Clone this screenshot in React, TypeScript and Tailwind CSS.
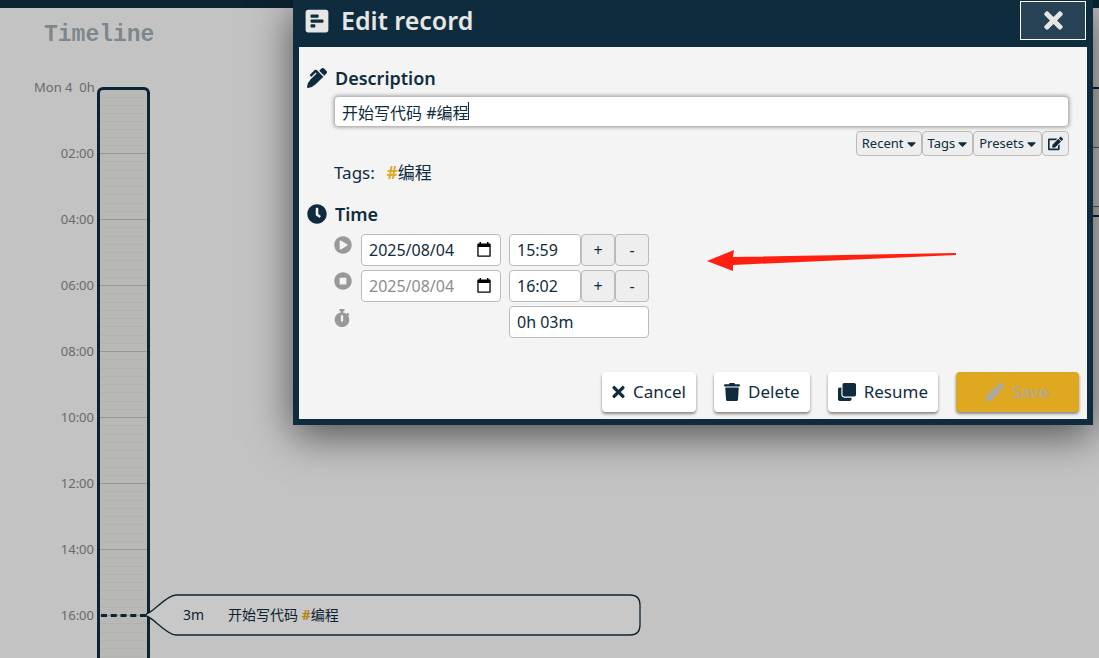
import type { InputHTMLAttributes, ReactNode } from "react";
import {
  FaCaretDown,
  FaClock,
  FaClone,
  FaEdit,
  FaPen,
  FaPenAlt,
  FaPlayCircle,
  FaPollH,
  FaStopCircle,
  FaStopwatch,
  FaTimes,
  FaTrash,
} from "react-icons/fa";

const hours = [
  "Mon 4  0h",
  "02:00",
  "04:00",
  "06:00",
  "08:00",
  "10:00",
  "12:00",
  "14:00",
  "16:00",
];

const Field = (props: InputHTMLAttributes<HTMLInputElement>) => (
  <input
    type="text"
    {...props}
    className={`h-8 rounded-sm border border-[#bbb] bg-white px-[7px] text-base outline-none ${props.className ?? ""}`}
  />
);

const SmallButton = ({ children, label }: { children: ReactNode; label?: string }) => (
  <button
    type="button"
    aria-label={label}
    className="flex h-[25px] items-center gap-[3px] rounded-sm border border-[#bbb] bg-[#eee] px-[5px] text-[13px]"
  >
    {children}
  </button>
);

const Caret = () => <FaCaretDown className="h-3.5 w-[9px]" />;

const StepButton = ({ children }: { children: ReactNode }) => (
  <button type="button" className="h-8 w-[34px] rounded-sm border border-[#bbb] bg-[#eee] text-base">
    {children}
  </button>
);

const ActionButton = ({ children }: { children: ReactNode }) => (
  <button
    type="button"
    className="flex h-10 items-center gap-2 rounded-sm bg-white px-2.5 text-[17px] shadow-[0_2px_3px_rgba(0,0,0,0.45)]"
  >
    {children}
  </button>
);

const DateField = ({ label, className = "" }: { label: string; className?: string }) => (
  <div className="relative w-[140px]">
    <Field aria-label={label} defaultValue="2025/08/04" className={`w-full ${className}`} />
    <svg viewBox="0 0 14 15" className="absolute top-2 right-2.5 h-[15px] w-3.5 text-black">
      <path
        d="M2.500 0h1.500v1.500h6V0h1.500v1.500H13a.7.7 0 0 1 .7.7V14a.7.7 0 0 1-.7.7H1a.7.7 0 0 1-.7-.7V2.200a.7.7 0 0 1 .7-.7h1.500zM1.600 5v8.400h10.800V5z"
        fill="currentColor"
        fillRule="evenodd"
      />
    </svg>
  </div>
);

const Timeline = () => (
  <main className="flex-1 pt-[13px] pl-[34px]">
    <h1 className="pl-2.5 font-['Liberation_Mono',monospace] text-[23px] leading-7 font-bold text-[#0f2c3e]/40">
      Timeline
    </h1>
    <div className="relative mt-[38px] flex">
      <div className="-mt-2 w-[63px] shrink-0 pr-[3px] text-right text-[13px] leading-4 whitespace-pre text-[#858585]">
        {hours.map((hour) => (
          <div key={hour} className="h-[66px]">
            {hour}
          </div>
        ))}
      </div>
      <div className="w-[53px] shrink-0 overflow-hidden rounded-t-md border-[3px] border-b-0 border-[#0f2c3e] bg-[#e6e6e4]">
        {hours.map((hour) => (
          <div
            key={hour}
            className="flex h-[66px] flex-col justify-evenly border-b border-[#bdbdbd] first:h-16"
          >
            {[1, 2, 3, 4, 5, 6, 7].map((n) => (
              <div key={n} className="h-px bg-[#dfdfdd]" />
            ))}
          </div>
        ))}
      </div>
      <div className="absolute top-[527px] left-[67px] w-[45px] border-t-[3px] border-dashed border-[#0f2c3e]" />
      <div className="absolute top-[507px] left-28 flex h-[42px] items-center">
        <svg viewBox="0 0 495 42" className="h-[42px] w-[495px]">
          <path
            d="M0 20C6 20 20 1 30 1H484Q494 1 494 11V31Q494 41 484 41H30C20 41 6 22 0 22Z"
            fill="#fafafa"
            stroke="currentColor"
            strokeWidth="1.300"
          />
        </svg>
        <div className="absolute left-[37px] flex text-sm">
          <span className="w-[45px]">3m</span>
          <span>
            开始写代码 <b className="text-[#dea821]">#</b>编程
          </span>
        </div>
      </div>
    </div>
  </main>
);

const Overview = () => (
  <aside className="w-1/3 pt-[79px]">
    <div className="border-t-2 border-[#0f2c3e]">
      <div className="h-[58px] bg-[#e6e6e4]" />
      <div className="h-[60px] border-y border-[#5d7180]" />
      <div className="h-2 bg-[#e6e6e4]" />
    </div>
    <div className="border-t-2 border-[#0f2c3e]" />
  </aside>
);

export default function App() {
  return (
    <div className="relative h-screen overflow-hidden bg-[#f4f4f4] font-['Noto_Sans','Noto_Sans_CJK_SC',sans-serif] text-[#0f2c3e]">
      <header className="h-2 bg-[#0f2c3e]" />
      <div className="flex">
        <Timeline />
        <Overview />
      </div>

      <div className="absolute inset-0 flex items-start justify-end bg-black/20 pr-1.5">
        <section
          role="dialog"
          aria-label="Edit record"
          className="w-full max-w-[800px] border-6 border-t-0 border-[#0f2c3e] bg-[#f4f4f4] shadow-[0_10px_40px_rgba(0,0,0,0.6)]"
        >
          <div className="flex h-[47px] items-start justify-between bg-[#0f2c3e] text-[#e6e7e5]">
            <h2 className="flex h-[41px] items-center gap-[11px] pl-[5px] text-[25px] font-semibold">
              <FaPollH className="size-[26px]" />
              Edit record
            </h2>
            <button
              type="button"
              aria-label="Close"
              className="mt-px mr-px flex h-[39px] w-[66px] items-center justify-center border border-white bg-[#274255]"
            >
              <FaTimes className="size-[27px]" />
            </button>
          </div>

          <div className="px-2 pt-4 pb-[7px]">
            <h3 className="flex h-[30px] items-center gap-2 text-lg font-semibold">
              <FaPenAlt className="size-5" />
              Description
            </h3>
            <div className="pr-2.5 pl-[27px]">
              <div className="relative mt-[3px]">
                <input
                  type="text"
                  aria-label="Description"
                  defaultValue="开始写代码 #编程"
                  className="block h-[31px] w-full rounded-sm border border-[#bbb] bg-white px-[7px] text-base caret-transparent shadow-[0_0_4px_rgba(0,0,0,0.4)] outline-none"
                />
                <span className="absolute top-1.5 left-[134px] h-[18px] w-px bg-[#0f2c3e]" />
              </div>
              <div className="mt-1 flex justify-end">
                <SmallButton>
                  Recent <Caret />
                </SmallButton>
                <SmallButton>
                  Tags <Caret />
                </SmallButton>
                <SmallButton>
                  Presets <Caret />
                </SmallButton>
                <SmallButton label="Edit presets">
                  <FaEdit className="size-[15px]" />
                </SmallButton>
              </div>
              <p className="mt-[5px] flex h-6 items-center gap-3 text-[17px]">
                <span>Tags:</span>
                <span>
                  <b className="text-[#dea821]">#</b>编程
                </span>
              </p>
            </div>

            <h3 className="mt-[14px] flex h-[30px] items-center gap-2 text-lg font-semibold">
              <FaClock className="size-5" />
              Time
            </h3>
            <div className="mt-[5px] flex items-start pl-[27px]">
              <div className="grid grid-cols-[27px_148px_140px] gap-y-1">
                <FaPlayCircle className="mt-0.5 size-[18px] text-[#999]" />
                <DateField label="Start date" />
                <div className="flex">
                  <Field aria-label="Start time" defaultValue="15:59" className="w-[72px]" />
                  <StepButton>+</StepButton>
                  <StepButton>-</StepButton>
                </div>
                <FaStopCircle className="mt-0.5 size-[18px] text-[#999]" />
                <DateField label="Stop date" className="text-[#8d8d8d]" />
                <div className="flex">
                  <Field aria-label="Stop time" defaultValue="16:02" className="w-[72px]" />
                  <StepButton>+</StepButton>
                  <StepButton>-</StepButton>
                </div>
                <FaStopwatch className="mt-[3px] h-[18px] w-4 text-[#999]" />
                <Field aria-label="Duration" defaultValue="0h 03m" className="col-start-3 w-full" />
              </div>
              <svg viewBox="0 0 250 22" className="mt-4 ml-[58px] h-[22px] w-[250px]">
                <path d="M0 11L27 0L26 7L249 3V5L26 15V21Z" fill="#ff2010" />
              </svg>
            </div>

            <div className="mt-[34px] flex justify-end gap-[18px]">
              <ActionButton>
                <FaTimes className="h-[18px] w-[13px]" /> Cancel
              </ActionButton>
              <ActionButton>
                <FaTrash className="h-[18px] w-4" /> Delete
              </ActionButton>
              <ActionButton>
                <FaClone className="size-[18px]" /> Resume
              </ActionButton>
              <button
                type="button"
                disabled
                className="flex h-10 w-[123px] items-center justify-center gap-2 rounded-sm bg-[#dea821] text-[17px] text-[#aaa] shadow-[0_2px_3px_rgba(0,0,0,0.45)]"
              >
                <FaPen className="size-[18px]" /> Save
              </button>
            </div>
          </div>
        </section>
      </div>
    </div>
  );
}
